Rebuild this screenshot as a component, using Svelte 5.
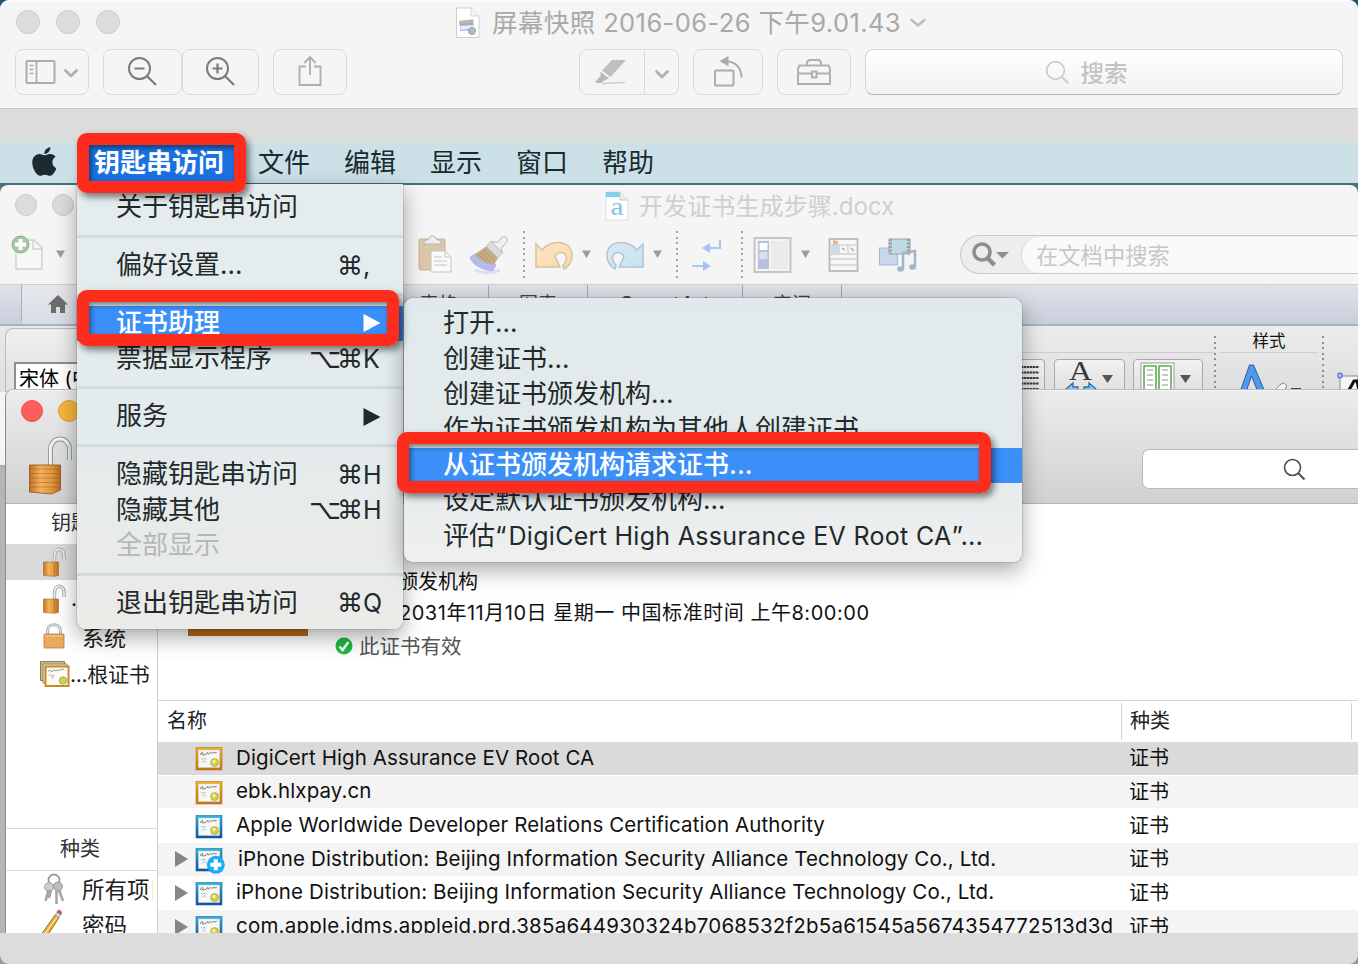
<script>
  const menubar = ['文件', '编辑', '显示', '窗口', '帮助'];
  const appMenu = [
    { label: '关于钥匙串访问' },
    { sep: true },
    { label: '偏好设置...', cmd: '⌘', key: ',' },
    { sep: true },
    { label: '证书助理', sub: true, active: true },
    { label: '票据显示程序', opt: '⌥', cmd: '⌘', key: 'K' },
    { sep: true },
    { label: '服务', sub: true },
    { sep: true },
    { label: '隐藏钥匙串访问', cmd: '⌘', key: 'H' },
    { label: '隐藏其他', opt: '⌥', cmd: '⌘', key: 'H' },
    { label: '全部显示', disabled: true },
    { sep: true },
    { label: '退出钥匙串访问', cmd: '⌘', key: 'Q' }
  ];
  const subMenu = [
    { label: '打开...' },
    { label: '创建证书...' },
    { label: '创建证书颁发机构...' },
    { label: '作为证书颁发机构为其他人创建证书' },
    { label: '从证书颁发机构请求证书...', active: true },
    { label: '设定默认证书颁发机构...' },
    { label: '评估“', latin: 'DigiCert High Assurance EV Root CA', tail: '”...' }
  ];
  const certs = [
    { name: 'DigiCert High Assurance EV Root CA', tone: 'gold', selected: true },
    { name: 'ebk.hlxpay.cn', tone: 'gold' },
    { name: 'Apple Worldwide Developer Relations Certification Authority', tone: 'blue' },
    { name: 'iPhone Distribution: Beijing Information Security Alliance Technology Co., Ltd.', tone: 'blue', open: true, plus: true },
    { name: 'iPhone Distribution: Beijing Information Security Alliance Technology Co., Ltd.', tone: 'blue', open: true },
    { name: 'com.apple.idms.appleid.prd.385a644930324b7068532f2b5a61545a5674354772513d3d', tone: 'blue', open: true, long: true }
  ];
</script>

{#snippet cert(tone, plus)}
  <svg class="cert" width="32" height="28" viewBox="0 0 32 28">
    <rect x="1" y="2.500" width="26" height="22.500" fill={tone === 'gold' ? 'url(#gold)' : 'url(#azure)'} stroke={tone === 'gold' ? '#b87a22' : '#1d6f9f'} stroke-width=".6" />
    <rect x="3.500" y="5" width="21" height="17.500" fill="#f7f7f5" stroke="#cfd5d8" stroke-width=".5" />
    <path d="M5.500 10c1-4 3-3 2 0 2 .6 2-1.200 3-.6s1.500-2.500 2.200-1.800-.4 2.200 1 1.200.8-1.400 2-1 1 .8 2 0 1.500.8 4-.4" fill="none" stroke="#666" stroke-width=".9" />
    <path d="M6 13l1.500 1.500 1.500-1.500 2 1.500M7 17.500l2-2 2 2" fill="none" stroke={tone === 'gold' ? '#f3a5a5' : '#8fc3ea'} stroke-width="1" />
    <circle cx="19.600" cy="17.600" r="4" fill="#d3cd48" stroke="#9c9a3c" stroke-width=".6" />
    <circle cx="19" cy="16.600" r="1.800" fill="#f0ee9a" />
    {#if plus}
      <circle cx="20.800" cy="18.800" r="9" fill="#1badf8" />
      <path d="M20.800 13.300v11M15.300 18.800h11" stroke="#fff" stroke-width="4" />
    {/if}
  </svg>
{/snippet}

{#snippet tri()}
  <svg class="tri" width="11" height="9" viewBox="0 0 11 9"><path d="M1 .5h9L5.500 8z" fill="#9c9c9c" /></svg>
{/snippet}

{#snippet chevron()}
  <svg width="16" height="12" viewBox="0 0 16 12"><path d="M2.500 3.500L8 9l5.500-5.500" fill="none" stroke="#b0b0b0" stroke-width="2.800" stroke-linecap="round" stroke-linejoin="round" /></svg>
{/snippet}

{#snippet openLock()}
  <svg width="26" height="30" viewBox="0 0 26 30">
    <path d="M12.500 15V9.500c0-10 9.500-9 9.500-1.500v5" fill="none" stroke="#a2aaad" stroke-width="3.400" />
    <path d="M12.500 15V9.500c0-10 9.500-9 9.500-1.500v5" fill="none" stroke="#eef2f3" stroke-width="1.600" />
    <path d="M1.500 15h15v13.500l-4 .8-11-.8z" fill="url(#brass)" stroke="#a5662a" stroke-width=".6" />
    <path d="M12.500 15v14" stroke="#a96622" stroke-width=".6" />
  </svg>
{/snippet}

<svg class="defs" width="0" height="0">
  <defs>
    <linearGradient id="gold" x1="0" y1="0" x2="0" y2="1"><stop offset="0" stop-color="#f0b21c" /><stop offset="1" stop-color="#c5741a" /></linearGradient>
    <linearGradient id="azure" x1="0" y1="0" x2="0" y2="1"><stop offset="0" stop-color="#2bb5e2" /><stop offset="1" stop-color="#0f4f9c" /></linearGradient>
    <linearGradient id="brass" x1="0" y1="0" x2="1" y2="0"><stop offset="0" stop-color="#c07426" /><stop offset=".35" stop-color="#f3b25c" /><stop offset=".75" stop-color="#dc9238" /><stop offset="1" stop-color="#b06a20" /></linearGradient>
    <linearGradient id="orange" x1="0" y1="0" x2="1" y2="1"><stop offset="0" stop-color="#fbe6c8" /><stop offset="1" stop-color="#f9d9ab" /></linearGradient>
    <linearGradient id="ice" x1="0" y1="0" x2="1" y2="1"><stop offset="0" stop-color="#d9e8f2" /><stop offset="1" stop-color="#c8e3f3" /></linearGradient>
  </defs>
</svg>

<div class="desk">
  <div class="preview">
    <header class="titlebar">
      <div class="lights"><i></i><i></i><i></i></div>
      <div class="title">
        <svg width="26" height="32" viewBox="0 0 26 32">
          <path d="M1.500 1h14.500l8 8v21.500H1.500z" fill="#fff" stroke="#cfcfcf" />
          <path d="M16 1v8h8" fill="#f5f5f5" stroke="#d5d5d5" />
          <path d="M4 14l14-1.500 1.500 10L5.500 24z" fill="#8fb2e2" />
          <path d="M4 14l14-1.500.4 3L4.500 17z" fill="#c9b59d" />
          <path d="M5 19l14-1v3L6 23z" fill="#e9eef2" />
          <circle cx="17" cy="24" r="3.500" fill="#b9babd" stroke="#9c9fa3" />
        </svg>
        <span>屏幕快照 2016-06-26 下午9.01.43</span>
        <svg width="18" height="12" viewBox="0 0 18 12"><path d="M2.500 3L9 8.500 15.500 3" fill="none" stroke="#bcbcbc" stroke-width="2.400" stroke-linecap="round" /></svg>
      </div>
    </header>
    <div class="tools">
      <div class="btn w74">
        <svg width="32" height="26" viewBox="0 0 32 26"><rect x="1.500" y="2" width="28" height="22" rx="1" fill="none" stroke="#ababab" stroke-width="2" /><path d="M11.500 2v22M4.500 6.500h4M4.500 10.500h4M4.500 14.500h4" stroke="#ababab" stroke-width="1.700" /></svg>
        <span class="mini">{@render chevron()}</span>
      </div>
      <div class="pair">
        <div class="btn w79"><svg width="32" height="32" viewBox="0 0 32 32"><circle cx="12.500" cy="12.500" r="10.500" fill="none" stroke="#7c7c7c" stroke-width="2" /><path d="M7.500 12.500h10M20 20l9 9" stroke="#7c7c7c" stroke-width="2.200" /></svg></div>
        <div class="btn w77"><svg width="32" height="32" viewBox="0 0 32 32"><circle cx="12.500" cy="12.500" r="10.500" fill="none" stroke="#7c7c7c" stroke-width="2" /><path d="M7.500 12.500h10M12.500 7.500v10M20 20l9 9" stroke="#7c7c7c" stroke-width="2.200" /></svg></div>
      </div>
      <div class="btn w74"><svg class="share" width="24" height="32" viewBox="0 0 24 32"><path d="M8 11.500H1.500V30h21V11.500H16M12 20V2.500M6.500 8L12 2l5.500 6" fill="none" stroke="#b0b0b0" stroke-width="1.900" /></svg></div>
      <div class="btn split">
        <div class="half"><svg width="32" height="28" viewBox="0 0 32 28"><path d="M17 2h14L15.500 19l-8.500-6.500z" fill="#bfbfbf" /><path d="M5.500 13.500l8.500 7-4 1.500-4 3H.500v-1.500l5-5.500z" fill="#b8b8b8" /><path d="M7 25.500l23-1" stroke="#cfcfcf" stroke-width="1.300" /></svg></div>
        <div class="arrow">{@render chevron()}</div>
      </div>
      <div class="btn w70"><svg width="32" height="34" viewBox="0 0 32 34"><rect x="3" y="15.500" width="18.500" height="15" rx="1" fill="none" stroke="#ababab" stroke-width="2" /><path d="M15 6.500c8 0 14.500 6 14.500 16" fill="none" stroke="#ababab" stroke-width="2" /><path d="M16.500 1v10.500L7.500 6z" fill="#ababab" /></svg></div>
      <div class="btn w74"><svg width="38" height="30" viewBox="0 0 38 30"><path d="M4.500 8.500h29l1.500 3V27H3V11.500zM3 16.500h13.500M21.500 16.500H35M17 14.500h4.500v6H17zM12 8.500v-3.500l2-2h10l2 2v3.500" fill="none" stroke="#b0b0b0" stroke-width="2" /></svg></div>
      <div class="search"><svg width="26" height="26" viewBox="0 0 26 26"><circle cx="10.500" cy="10.500" r="8.800" fill="none" stroke="#cbcbcb" stroke-width="1.700" /><path d="M17 17l6.500 6.500" stroke="#cbcbcb" stroke-width="2" /></svg><span>搜索</span></div>
    </div>

    <div class="shot">
      <nav class="menubar">
        <svg width="24" height="29" viewBox="4 30 366 452"><path fill="#1b2b30" d="M318.700 268.700c-.2-36.700 16.400-64.400 50-84.800-18.800-26.900-47.200-41.700-84.700-44.600-35.500-2.800-74.300 20.700-88.500 20.700-15 0-49.400-19.700-76.400-19.700C63.300 141.200 4 184.800 4 273.500q0 39.300 14.400 81.200c12.800 36.700 59 126.700 107.200 125.200 25.200-.6 43-17.900 75.800-17.900 31.800 0 48.300 17.900 76.400 17.900 48.600-.7 90.400-82.500 102.600-119.300-65.200-30.700-61.700-90-61.700-91.900zm-56.600-164.200c27.300-32.400 24.800-61.900 24-72.500-24.100 1.400-52 16.400-67.900 34.900-17.500 19.800-27.800 44.300-25.600 71.900 26.100 2 49.900-11.400 69.500-34.300z" /></svg>
        <b>钥匙串访问</b>
        <div class="mitems">{#each menubar as m}<span>{m}</span>{/each}</div>
      </nav>

      <section class="word">
        <div class="wtitle">
          <div class="lights small"><i></i><i></i></div>
          <div class="doc">
            <svg width="24" height="30" viewBox="0 0 24 30"><path d="M1 1h14.500L23 9v20H1z" fill="#fff" stroke="#d6dde0" /><path d="M1 1h14v5H1z" fill="#7fd0ec" /><path d="M15 1v8h8" fill="#eee" stroke="#ccc" /><text x="5.500" y="24" font-family="Liberation Serif" font-size="26" textLength="13" lengthAdjust="spacingAndGlyphs" fill="#83c2e6">a</text></svg>
            <span>开发证书生成步骤.docx</span>
          </div>
        </div>
        <div class="wtools">
          <svg class="c-new" width="36" height="40" viewBox="0 0 36 40"><path d="M6 5h18l8 8v21H6z" fill="#f7f7f7" stroke="#d0d0d0" stroke-width="1.400" /><path d="M23 5v9h9" fill="none" stroke="#d0d0d0" stroke-width="1.400" /><circle cx="10.500" cy="9.500" r="8.500" fill="#a5c9a2" stroke="#8fae8d" /><path d="M10.500 4v11M5 9.500h11" stroke="#fff" stroke-width="4" /></svg>
          <span class="c-tri1">{@render tri()}</span>
          <svg class="c-paste" width="36" height="40" viewBox="0 0 36 40"><rect x="2" y="4" width="26" height="31" rx="2" fill="#dcc8a8" stroke="#c9b18d" /><path d="M7 9V6l5-2c0-4 7-4 7 0l5 2v3z" fill="#ededed" stroke="#b5b5b5" /><path d="M14 16h14l6 6v15H14z" fill="#fafafa" stroke="#c4c4c4" /><path d="M28 16v6h6" fill="none" stroke="#c4c4c4" /><path d="M17 22h8M17 26h13M17 30h13" stroke="#d5d5d5" stroke-width="1.500" /></svg>
          <svg class="c-brush" width="40" height="40" viewBox="0 0 40 40"><path d="M6 35c8 4 18 3 25 0" stroke="#dcdcf5" stroke-width="3" fill="none" /><path d="M1 22c2 8 12 13 23 14l3-6L6 19z" fill="#b3bbf2" stroke="#a2a8e0" stroke-width=".6" /><path d="M6 19l12-8 11 12-4 7c-9-1-15-4-19-11z" fill="#c7ad86" /><path d="M9 19l9 8M12 17l9 10M15 15l10 11" stroke="#a98f6b" stroke-width=".8" /><path d="M17 11l6-5 11 11-5 6z" fill="#dcdcdc" stroke="#c0c0c0" /><path d="M23 7l6 0 4-5c5-2 7 3 4 6l-4 4-1 5z" fill="#f0f0f0" stroke="#b9b9b9" /></svg>
          <i class="dots c-d1"></i>
          <svg class="c-undo" width="40" height="32" viewBox="0 0 40 32"><path d="M2 5l6 6C15 1 38-1 38 17c0 6-3 10-8 13l-1-4c9-8-1-18-8-9 1 4 3 7 5 11H2z" fill="url(#orange)" stroke="#dac09c" stroke-width="1.500" /></svg>
          <span class="c-tri2">{@render tri()}</span>
          <svg class="c-redo" width="40" height="32" viewBox="0 0 40 32"><path d="M38 5l-6 6C25 1 2-1 2 17c0 6 3 10 8 13l1-4c-9-8 1-18 8-9-1 4-3 7-5 11h24z" fill="url(#ice)" stroke="#adc5d6" stroke-width="1.500" /></svg>
          <span class="c-tri3">{@render tri()}</span>
          <i class="dots c-d2"></i>
          <svg class="c-wrap" width="32" height="34" viewBox="0 0 32 34"><path d="M29 2v8H14M1 28h14" fill="none" stroke="#a9c8f4" stroke-width="2.200" /><path d="M19 5v10l-8-5zM12 23v10l8-5z" fill="#a4c4f4" /></svg>
          <i class="dots c-d3"></i>
          <svg class="c-side" width="40" height="38" viewBox="0 0 40 38"><rect x="1.500" y="2" width="36" height="34" fill="#f3f3f3" stroke="#c5c5c5" stroke-width="2" /><rect x="5" y="5" width="11" height="28" fill="#b5c0dc" /><rect x="6.500" y="7" width="8" height="7" fill="#fff" /><rect x="6.500" y="16" width="8" height="7" fill="#d9dfee" /><path d="M18 5h17v28H18z" fill="#ebebeb" /></svg>
          <span class="c-tri4">{@render tri()}</span>
          <svg class="c-gal" width="32" height="36" viewBox="0 0 32 36"><rect x="1.500" y="2" width="28" height="32" fill="#f7f7f7" stroke="#bababa" stroke-width="1.800" /><path d="M2 8h27M2 17h27M2 22h27M2 28h27M11 8v9M20 8v9" stroke="#d2d2d2" stroke-width="1.500" /><rect x="3" y="8" width="8" height="8" fill="#c5dfee" /><path d="M5 7V3l5 1v4z" fill="#efb0a0" /><path d="M14 11l3 2M23 11l3 3" stroke="#aaa" stroke-width="1.500" /></svg>
          <svg class="c-media" width="40" height="36" viewBox="0 0 40 36"><rect x="1.500" y="11" width="18" height="17" fill="#c8d6ee" stroke="#a9b9d8" /><rect x="11" y="2" width="21" height="15" fill="#bedbe5" stroke="#a2a2a2" /><path d="M12.500 2v15M30.500 2v15" stroke="#9c9c9c" stroke-width="3" stroke-dasharray="2 1.500" /><path d="M25 32V16l12-2v16" fill="none" stroke="#a3b5cd" stroke-width="2.500" /><ellipse cx="22.500" cy="32" rx="3.500" ry="2.800" fill="#a3b5cd" /><ellipse cx="34.500" cy="30" rx="3.500" ry="2.800" fill="#a3b5cd" /></svg>
          <div class="wsearch">
            <svg width="40" height="28" viewBox="0 0 40 28"><circle cx="11" cy="11" r="8" fill="none" stroke="#8e8e8e" stroke-width="3.600" /><path d="M16.500 17l7 7" stroke="#8e8e8e" stroke-width="4.500" /><path d="M25 11h13l-6.500 6.500z" fill="#8e8e8e" /></svg>
            <span>在文档中搜索</span>
          </div>
        </div>
        <div class="wtabs">
          <div class="edge"></div>
          <div class="home"><svg width="20" height="18" viewBox="0 0 20 18"><path d="M10 0l10 9.500h-3V18h-5v-6H8v6H3V9.500H0z" fill="#6e6e6e" /></svg></div>
          <div class="tab t1">表格</div><div class="tab t2">图表</div><div class="tab t3">SmartArt</div><div class="tab t4">审阅</div>
        </div>
        <div class="ribbon">
          <div class="rleft"><div class="combo">宋体 (中文</div></div>
          <div class="rmain">
            <div class="rgroup">
              <div class="rhead"></div>
              <div class="rrow">
                <div class="rb r0"><svg width="18" height="34" viewBox="0 0 18 34"><path d="M0 7h18M0 12.500h18M0 18h18M0 23.500h18M0 29h18" stroke="#3c3c3c" stroke-width="1.800" stroke-dasharray="2.500 .5" /></svg></div>
                <div class="rb r1"><svg width="54" height="38" viewBox="0 0 54 38"><text x="5" y="20" font-family="Liberation Serif" font-size="27" fill="#3a3a3a" textLength="23" lengthAdjust="spacingAndGlyphs">A</text><path d="M1 30l8-7v4h5v6H9v4zM33 30l-8-7v4h-5v6h5v4z" fill="#8cc4f2" stroke="#2b6cb0" stroke-width="1.300" /><path d="M38 15h11l-5.500 8z" fill="#555" /></svg></div>
                <div class="rb r2"><svg width="54" height="36" viewBox="0 0 54 36"><rect x="1" y="3" width="33" height="36" fill="#fff" stroke="#999" /><path d="M4 40V6h12v34zM19 40V6h12v34z" fill="#fff" stroke="#5cae50" stroke-width="1.600" /><path d="M7 10h6M7 15h6M7 20h6M7 25h6M7 30h6M22 10h6M22 15h6M22 20h6M22 25h6M22 30h6" stroke="#b5b5b5" stroke-width="1.600" /><path d="M40 15h11l-5.500 8z" fill="#555" /></svg></div>
              </div>
            </div>
            <i class="dots dark"></i>
            <div class="rstyle">
              <div class="rhead">样式</div>
              <svg width="76" height="36" viewBox="0 0 76 36"><path d="M1 36L10.500 9h4L26 36h-7L12.500 20 7 36z" fill="#5298ec" stroke="#2d5f9c" /><path d="M36 34l6-6c3-2 7 1 5 4l-5 6z" fill="#f4f4f4" stroke="#888" /><path d="M52 33h10" stroke="#444" stroke-width="2" /></svg>
            </div>
            <i class="dots dark"></i>
            <div class="rlast"><svg width="24" height="20" viewBox="0 0 24 20"><path d="M6 6h18v14H6z" fill="#f6f6f6" stroke="#888" /><circle cx="6" cy="5.500" r="2.200" fill="#c8cdff" stroke="#6470e8" stroke-width="1.400" /><path d="M15 20l5-9h3l2 9" fill="none" stroke="#111" stroke-width="3" /></svg></div>
          </div>
        </div>
      </section>

      <section class="keychain">
        <div class="khead">
          <div class="kleft">
            <div class="klights"><i class="red"></i><i class="yellow"></i></div>
            <svg width="48" height="60" viewBox="0 0 48 60">
              <path d="M25.500 29V14c0-15 19-14 19-1v11" fill="none" stroke="#929b9e" stroke-width="5" />
              <path d="M25.500 29V14c0-15 19-14 19-1v11" fill="none" stroke="#dfe6e8" stroke-width="3" />
              <path d="M24.800 29V14c0-13 15-15 18-5" fill="none" stroke="#fff" stroke-width="1.200" />
              <path d="M4.500 29h31v25l-9 4-22-2z" fill="url(#brass)" stroke="#8f5218" stroke-width=".8" />
              <path d="M5 33h30M5 37.500h30M5 42h30M5 46.500h30M5 51h30" stroke="#8f5218" stroke-opacity=".4" />
            </svg>
          </div>
          <div class="ksearch"><svg width="24" height="24" viewBox="0 0 24 24"><circle cx="9.500" cy="9.500" r="8" fill="none" stroke="#4d4d4d" stroke-width="1.600" /><path d="M15.500 15.500l6 6" stroke="#4d4d4d" stroke-width="2" /></svg></div>
        </div>
        <div class="kbody">
          <aside>
            <div class="shead">钥匙串</div>
            <div class="srow sel"><span class="ic">{@render openLock()}</span></div>
            <div class="srow"><span class="ic">{@render openLock()}</span><span class="dotlab">...</span></div>
            <div class="srow"><span class="ic"><svg width="26" height="28" viewBox="0 0 26 28"><path d="M5.500 13V9.500c0-9 13-9 13 0V13" fill="none" stroke="#a5adaf" stroke-width="3" /><path d="M5.500 13V9.500c0-9 13-9 13 0V13" fill="none" stroke="#e5eaeb" stroke-width="1.200" /><rect x="2" y="12" width="20" height="14" rx="1" fill="#e9aa5e" stroke="#b87829" stroke-width=".8" /><path d="M3 14h18" stroke="#f8cf90" /></svg></span><span class="lab">系统</span></div>
            <div class="srow"><span class="ic wide"><svg width="32" height="28" viewBox="0 0 32 28"><path d="M1.500 1.500h24v19h-24z" fill="#c9ba9e" stroke="#8e7b5c" /><path d="M4 4h24v19H4z" fill="#ece5d5" stroke="#ad8133" /><rect x="6.500" y="6.500" width="23" height="19.500" fill="#fbfbf8" stroke="#c8892a" stroke-width="2" /><path d="M9 11.500c3-3 2 1 4 0s2-2 3-1 3-1 4-.5 3-.5 5-1" fill="none" stroke="#777" stroke-width=".8" /><path d="M10 15l3 1 2-1-2 4" fill="none" stroke="#f0a0a0" /><circle cx="24" cy="20.500" r="3.800" fill="#d3cf52" stroke="#999838" stroke-width=".6" /></svg></span><span class="root">...根证书</span></div>
            <div class="fill"></div>
            <div class="khd2">种类</div>
            <div class="srow k2"><span class="ic"><svg width="26" height="32" viewBox="0 0 26 32"><circle cx="12" cy="7" r="5.500" fill="none" stroke="#9c9c9c" stroke-width="1.800" /><circle cx="7" cy="14" r="4.500" fill="#cdcdcd" stroke="#9a9a9a" stroke-width=".8" /><circle cx="16" cy="13.500" r="4.500" fill="#bdbdbd" stroke="#8c8c8c" stroke-width=".8" /><path d="M6.500 17L3.500 28M9 17l-2 8M14.500 17v14M17 17l4 11" stroke="#a6a6a6" stroke-width="2.600" /></svg></span><span class="lab2">所有项目</span></div>
            <div class="srow k2"><span class="ic"><svg width="26" height="32" viewBox="0 0 26 32"><path d="M-1 28L13 8l4 2.500L4 31z" fill="#eeb43a" stroke="#70501e" stroke-width=".8" /><path d="M2 28L15.500 9.500" stroke="#fbe08c" stroke-width="1.200" /><path d="M13 8l2-3 4 2.500-2 3z" fill="#cfd5d7" stroke="#888" stroke-width=".5" /><path d="M15 5c1-3.500 6-1 4 2.500z" fill="#e0514a" stroke="#a33" stroke-width=".6" /></svg></span><span class="lab2">密码</span></div>
          </aside>
          <main>
            <div class="detail">
              <div class="bigcert"></div>
              <div class="info">
                <p>根证书颁发机构</p>
                <p class="exp">过期：<span>2031年11月10日 星期一 中国标准时间 上午8:00:00</span></p>
                <p class="ok"><svg width="18" height="18" viewBox="0 0 18 18"><circle cx="9" cy="9" r="8.500" fill="#1fb841" /><path d="M4.500 9.500l3 3.500 6-8" fill="none" stroke="#fff" stroke-width="2.400" /></svg>此证书有效</p>
              </div>
            </div>
            <div class="thead"><div class="c1">名称</div><div class="c2">种类</div></div>
            {#each certs as c}
              <div class="trow" class:sel={c.selected}>
                <span class="disc">{#if c.open}<svg width="15" height="16" viewBox="0 0 15 16"><path d="M1 0v16l13-8z" fill="#868686" /></svg>{/if}</span>
                {@render cert(c.tone, c.plus)}
                <span class="nm" class:long={c.long} class:shift={c.plus}>{c.name}</span>
                <span class="kd">证书</span>
              </div>
            {/each}
          </main>
        </div>
      </section>

      <div class="menu app">
        {#each appMenu as m}
          {#if m.sep}
            <div class="sep"></div>
          {:else}
            <div class="item" class:active={m.active} class:disabled={m.disabled}>
              <span class="l">{m.label}</span>
              {#if m.sub}<svg width="18" height="18" viewBox="0 0 18 18"><path d="M.5 0v18L17.500 9z" fill="currentColor" /></svg>{/if}
              {#if m.key}<span class="sc"><em class="o">{m.opt ?? ''}</em><em>{m.cmd}</em><kbd>{m.key}</kbd></span>{/if}
            </div>
          {/if}
        {/each}
      </div>
      <div class="menu sub">
        {#each subMenu as m}
          <div class="item" class:active={m.active}><span class="l">{m.label}{#if m.latin}<span class="lat">{m.latin}</span>{m.tail}{/if}</span></div>
        {/each}
      </div>
    </div>
  </div>
  <div class="mark m1"></div>
  <div class="mark m2"></div>
  <div class="mark m3"></div>
</div>

<style>
  :global(body) { margin: 0; overflow: hidden; }
  .desk, .desk * { box-sizing: border-box; }
  .defs { position: absolute; }
  .desk { position: relative; width: 1358px; height: 964px; overflow: hidden; background: linear-gradient(#1d5468 50%, #9a9a8c 50%); font-family: Inter, "Noto Sans CJK SC", sans-serif; white-space: nowrap; }
  svg { display: block; flex: none; }
  i { display: block; }
  .preview { height: 964px; display: flex; flex-direction: column; background: #dcdcdc; border-radius: 9px; overflow: hidden; }
  .titlebar { height: 49px; display: grid; grid-template-columns: 440px 1fr; background: linear-gradient(#fff, #f5f5f5 3px); }
  .lights { display: flex; gap: 16px; padding: 10px 0 0 16px; }
  .lights i { width: 24px; height: 24px; border-radius: 50%; background: #dcdcdc; border: 1px solid #cbcbcb; }
  .title { display: flex; align-items: center; height: 45px; padding-left: 15px; color: #a9a9a9; font-size: 25.500px; }
  .title span { margin: -5px 9px 0 11px; width: 408px; letter-spacing: .4px; }
  .tools { height: 60px; display: flex; gap: 14px; padding: 0 15px; background: #f5f5f5; border-bottom: 1px solid #c9c9c9; align-items: flex-start; }
  .btn { height: 46px; border: 1.500px solid #dadada; border-radius: 8px; display: flex; align-items: center; justify-content: center; }
  .w74 { width: 74px; } .w79 { width: 79px; } .w77 { width: 77px; } .w70 { width: 70px; }
  .mini { margin: 1px 0 0 6px; }
  .pair { display: flex; }
  .share { margin-bottom: 2px; }
  .split { margin-left: 218px; width: 100px; justify-content: stretch; }
  .half { width: 65px; height: 43px; display: flex; align-items: center; justify-content: center; border-right: 1.500px solid #dadada; padding-right: 2px; }
  .arrow { flex: 1; display: flex; justify-content: center; padding-top: 3px; }
  .search { flex: 1; height: 46px; display: flex; align-items: center; justify-content: center; gap: 10px; border: 1px solid #d5d5d5; border-bottom-color: #b5b5b5; border-radius: 8px; background: linear-gradient(#fff, #f2f2f2); color: #c3c3c3; font-size: 23.500px; font-weight: 500; padding-right: 36px; }
  .search svg { margin-top: 2px; }
  .shot { position: relative; margin-top: 33px; height: 791px; overflow: hidden; background: #47707c; }
  .menubar { height: 41px; display: flex; align-items: center; padding-left: 32px; background: #cbe1e7; color: #1a2a2f; font-size: 26px; border-top: 1px solid #d6e8ec; }
  .menubar svg { margin: -3px 21px 0 0; }
  .menubar b { padding: 0 0 2px 17px; line-height: 37px; width: 160px; color: #fff; background: #1b72e2; }
  .mitems { display: flex; gap: 34px; padding: 0 0 5px 21px; }

  .word { position: absolute; left: 0; top: 43px; width: 1358px; height: 280px; border-radius: 8px 8px 0 0; background: #f5f5f5; overflow: hidden; }
  .wtitle { height: 42px; display: flex; }
  .small { gap: 15px; padding: 9px 0 0 15px; width: 605px; }
  .small i { width: 22px; height: 22px; }
  .doc { display: flex; align-items: center; gap: 10px; color: #cfcfcf; font-size: 24.100px; }
  .doc span { margin-top: -3px; }
  .wtools { height: 58px; display: grid; align-items: center; border-bottom: 1px solid #cfcfcf; padding-bottom: 2px;
    grid-template-columns: 10px 36px 9px 11px 351px 36px 16px 40px 14px 4px 7px 40px 7px 11px 13px 40px 7px 11px 13px 4px 11px 32px 18px 4px 8px 40px 7px 11px 17px 32px 18px 40px 42px 1fr; }
  .wtools > * { grid-row: 1; }
  .c-new { grid-column: 2; } .c-tri1 { grid-column: 4; } .c-paste { grid-column: 6; } .c-brush { grid-column: 8; }
  .c-d1 { grid-column: 10; } .c-undo { grid-column: 12; } .c-tri2 { grid-column: 14; } .c-redo { grid-column: 16; }
  .c-tri3 { grid-column: 18; } .c-d2 { grid-column: 20; } .c-wrap { grid-column: 22; } .c-d3 { grid-column: 24; }
  .c-side { grid-column: 26; } .c-tri4 { grid-column: 28; } .c-gal { grid-column: 30; } .c-media { grid-column: 32; }
  .dots { width: 2px; height: 48px; background: repeating-linear-gradient(#a5a5a5 0 2px, transparent 2px 5.600px); }
  .wsearch { grid-column: 34; height: 39px; display: flex; align-items: center; background: #ededed; border: 1.500px solid #c9c9c9; border-right: 0; border-radius: 20px 0 0 20px; padding-left: 10px; }
  .wsearch span { flex: 1; height: 36px; line-height: 37px; margin-left: 10px; padding-left: 14px; background: #fafafa; border-left: 1.500px solid #d5d5d5; border-radius: 18px 0 0 18px; font-size: 22.300px; color: #c7c7c7; }
  .wtabs { height: 41px; display: flex; background: linear-gradient(#dfe2e8, #c9cedb); border-bottom: 2px solid #a9b2c3; font-size: 19px; color: #444; }
  .edge { width: 22px; height: 37px; border-right: 1px solid #a9aeb9; }
  .home { width: 367px; padding: 10px 0 0 26px; background: linear-gradient(#e6e8ed, #d8dce6); }
  .tab { border-right: 1px solid #a0a4ad; text-align: center; height: 39px; line-height: 39px; }
  .t1 { width: 100px; } .t2 { width: 99px; } .t3 { width: 155px; font-size: 21.500px; } .t4 { width: 99px; }
  .ribbon { height: 66px; display: flex; background: linear-gradient(#e9e9e9, #dedede); }
  .rleft { width: 1022px; margin: 2px 0 0 5px; padding: 33px 0 0 8px; border: 1px solid #bbb; border-right: 0; border-radius: 8px 0 0 0; background: linear-gradient(#efefef, #e1e1e1); margin-right: -4px; }
  .combo { width: 200px; height: 36px; line-height: 31px; background: #fff; border: 2px solid #8d8d8d; border-bottom: 0; font-size: 20px; padding-left: 3px; }
  .rmain { flex: 1; display: flex; background: linear-gradient(#ececec, #dedede); }
  .rgroup { width: 194px; }
  .rhead { height: 27px; line-height: 31px; text-align: center; font-size: 16.500px; color: #111; border-bottom: 1px solid #cdcdcd; }
  .rrow { display: flex; padding-top: 6px; height: 39px; overflow: hidden; }
  .rb { height: 42px; border: 1.500px solid #a9a9a9; border-radius: 4px; background: linear-gradient(#f2f2f2, #dadada); overflow: hidden; display: flex; }
  .r0 { width: 25px; border-left: 0; border-radius: 0 4px 4px 0; margin-right: 9px; padding-left: 1px; }
  .r1 { width: 71px; padding-left: 9px; margin-right: 8px; } .r2 { width: 70px; padding-left: 6px; }
  .dark { height: 60px; margin-top: 10px; background: repeating-linear-gradient(#8e8e8e 0 2px, transparent 2px 5.600px); }
  .rstyle { width: 106px; padding: 0 4px; }
  .rstyle svg { margin-left: 19px; margin-top: 3px; }
  .rlast { padding: 44px 0 0 10px; }

  .shot::before { content: ""; position: absolute; left: 0; top: 248px; width: 30px; height: 543px; background: linear-gradient(#b8bfce 70px, #8f9297 71px, #b5b5b5 78px); z-index: 0; }
  .keychain { position: absolute; left: 5px; top: 248px; width: 1353px; height: 543px; border-radius: 8px 0 0 0; overflow: hidden; background: #fff; border-left: 1px solid #8c8c8c; box-shadow: 0 -1px 0 #bbb; }
  .khead { height: 114px; display: flex; justify-content: space-between; background: linear-gradient(#ececec, #d1d1d1); border-top: 1px solid #f5f5f5; border-bottom: 1.500px solid #b3b3b3; }
  .kleft { padding: 9px 0 0 15px; }
  .klights { display: flex; gap: 15px; margin-bottom: 14px; }
  .kleft svg { margin-left: 4px; }
  .klights i { width: 22px; height: 22px; border-radius: 50%; }
  .red { background: #fc5f5b; border: 1px solid #e2504c; } .yellow { background: #f6b73c; border: 1px solid #dc9f33; }
  .ksearch { width: 216px; height: 40px; margin-top: 58px; padding: 8px 0 0 140px; background: #fff; border: 1.500px solid #b9b9b9; border-right: 0; border-radius: 7px 0 0 7px; }
  .kbody { height: 429px; display: grid; grid-template-columns: 152px 1fr; }
  aside { height: 429px; display: flex; flex-direction: column; border-right: 1.500px solid #cfcfcf; font-size: 21px; color: #1c1c1c; overflow: hidden; }
  .shead { height: 40px; line-height: 38px; padding-left: 45px; font-size: 20px; color: #333; flex: none; }
  .srow { height: 37.500px; display: flex; align-items: center; flex: none; }
  .srow.sel { background: #d9d9d9; height: 36px; }
  .ic { width: 63px; padding-left: 36px; display: block; flex: none; }
  .wide { padding-left: 33px; width: 64px; }
  .dotlab { margin-left: 2px; }
  .lab { margin-left: 13px; font-size: 22px; } .root { font-size: 21px; letter-spacing: -.3px; margin-top: -2px; }
  .fill { flex: 1; }
  .khd2 { height: 43px; flex: none; line-height: 41px; padding-left: 54px; font-size: 20px; color: #333; border: 1.500px solid #d9d9d9; border-width: 1.500px 0; }
  .k2 { height: 36px; } .k2:last-child { height: 26px; overflow: hidden; align-items: flex-start; }
  .lab2 { margin-left: 13px; font-size: 22.500px; line-height: 37px; width: 71px; overflow: hidden; flex: none; }
  main { height: 429px; overflow: hidden; font-size: 20.500px; }
  .detail { height: 197px; display: flex; border-bottom: 1px solid #d6d6d6; }
  .bigcert { width: 120px; height: 100px; margin: 32px 27px 0 30px; background: #f6f6f2; border: 7px solid #b56b17; border-top-color: #f0b21c; flex: none; }
  .info { padding-top: 63px; }
  p { margin: 0; height: 31px; line-height: 31px; font-size: 20px; color: #111; }
  .info p:first-child { padding-left: 3px; }
  .exp { display: flex; }
  .exp span { margin-left: 4px; letter-spacing: .53px; }
  p.ok { display: flex; align-items: center; gap: 6px; font-size: 20.500px; color: #555; padding-top: 3px; }
  .thead { height: 41px; display: flex; align-items: center; font-size: 20px; color: #222; }
  .c1 { width: 964px; padding-left: 9px; height: 37px; line-height: 37px; border-right: 1px solid #d3d3d3; }
  .c2 { width: 230px; padding-left: 8px; height: 37px; line-height: 37px; border-right: 1px solid #d3d3d3; }
  .trow { height: 33.650px; display: flex; align-items: center; border-bottom: 1px solid #fff; color: #111; }
  .trow:nth-child(even) { background: #f4f4f4; }
  .trow.sel { background: #dadada; }
  .disc { width: 37px; padding-left: 16px; flex: none; }
  .cert { margin-top: 2px; }
  .nm { width: 902px; padding: 0 0 2px 9px; letter-spacing: .1px; flex: none; }
  .long { letter-spacing: .22px; }
  .shift { padding-left: 11px; }
  .kd { font-size: 20px; padding-bottom: 3px; }

  .menu { position: absolute; color: #22292b; font-size: 26px; box-shadow: 0 8px 22px rgba(0,0,0,.35), 0 0 1.500px rgba(0,0,0,.5); }
  .app { left: 77px; top: 42px; width: 326px; height: 445px; padding-top: 6px; border-radius: 0 0 9px 9px; background: linear-gradient(#e4ecee, #e4ebec 55%, #ebebe8); }
  .sub { left: 404px; top: 156px; width: 618px; height: 264px; padding-top: 8px; border-radius: 9px; background: linear-gradient(#e0e9eb, #e3eaec 55%, #efefef); }
  .item { height: 35.400px; display: flex; align-items: center; justify-content: space-between; padding: 0 22px 0 39px; }
  .app .item.active { background: #3b8ff8; color: #fff; font-weight: 500; }
  .sub .item.active { background: #3b8ff8; color: #fff; font-weight: 500; }
  .disabled { color: #b3b8b8; }
  .sep { height: 22.500px; display: flex; align-items: center; }
  .sep::before { content: ""; flex: 1; height: 3px; background: #d3dadb; }
  .sc { display: grid; grid-template-columns: 28px 26px 20px; align-items: center; margin-right: -2px; }
  em { font: normal 26px "DejaVu Sans"; } kbd { font: 25px Inter; }
  .o { font-size: 28px; line-height: 30px; }
  .l { line-height: 34px; margin-top: -1px; }
  .lat { font-size: 25px; letter-spacing: .3px; margin-left: 2px; }

  .mark { position: absolute; border: 12px solid #fe2c1c; border-radius: 10px; box-shadow: 3px 4px 7px rgba(0,0,0,.5), inset 2px 3px 5px rgba(0,0,0,.45); }
  .m1 { left: 77px; top: 133px; width: 169px; height: 60px; }
  .m2 { left: 77px; top: 290px; width: 322px; height: 56px; }
  .m3 { left: 397px; top: 432px; width: 594px; height: 61px; }
</style>
